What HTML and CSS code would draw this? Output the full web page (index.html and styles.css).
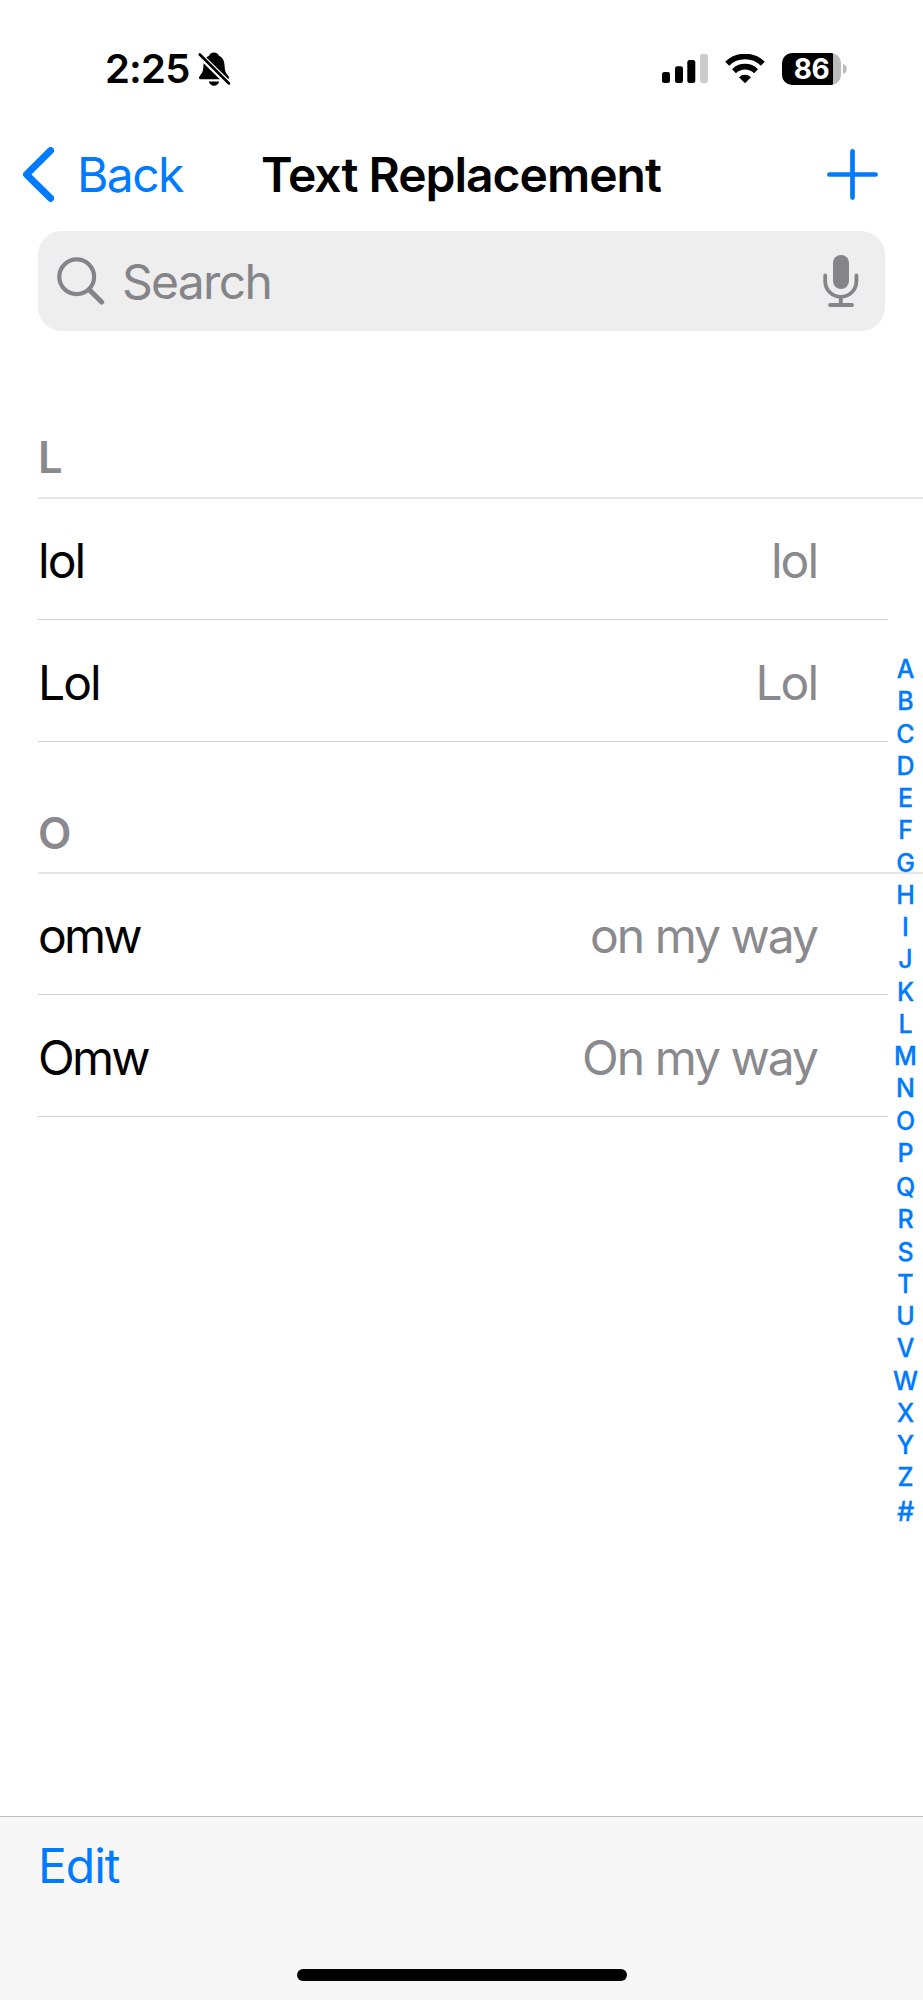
FILE: index.html
```html
<!DOCTYPE html>
<html lang="en">
<head>
<meta charset="utf-8">
<title>Text Replacement</title>
<link rel="stylesheet" href="styles.css">
</head>
<body>
<div class="screen">
  <div class="status">
    <span class="clock">2:25</span>
    <svg class="bell" width="32" height="36" viewBox="0 0 32 36">
      <path d="M16 1.6c-2.600 0-4.600 1.300-4.900 3.200C7.200 6.500 5.600 10 5.400 15c-.2 5.500-1.400 7.300-3.300 9.400C.6 26 .5 28.300 3 28.300h26c2.500 0 2.400-2.300.9-3.900-1.900-2.100-3.100-3.900-3.300-9.400-.2-5-1.800-8.500-5.700-10.200-.3-1.900-2.300-3.200-4.900-3.200z"/>
      <path d="M10.800 30.500h10.400c-.6 2.600-2.600 4.200-5.200 4.200s-4.600-1.600-5.200-4.200z"/>
      <path d="M-.5 2L32.500 34.500" stroke="#fff" stroke-width="6"/>
      <path d="M1.800 3.500L31 32.500" stroke="#000" stroke-width="2.600" stroke-linecap="round"/>
    </svg>
    <svg class="signal" width="46" height="30" viewBox="0 0 46 30">
      <rect x="0" y="18" width="8" height="11" rx="2.300"/>
      <rect x="13" y="12.300" width="8" height="16.700" rx="2.300"/>
      <rect x="25.300" y="6" width="8" height="23" rx="2.300"/>
      <rect x="38" y="0" width="8" height="29" rx="2.300" fill="#ccc"/>
    </svg>
    <svg class="wifi" width="40" height="30" viewBox="0 0 40 30">
      <path d="M2.200 9.700a25.500 25.500 0 0 1 35.600 0" fill="none" stroke="#000" stroke-width="5.600"/>
      <path d="M9 17.200a15.600 15.600 0 0 1 22 0" fill="none" stroke="#000" stroke-width="5.600"/>
      <path d="M20 29.300l-6-6.100a8.700 8.700 0 0 1 12 0z"/>
    </svg>
    <div class="battery"><span class="level">86</span></div>
    <svg class="nub" width="4" height="10" viewBox="0 0 4 10"><path d="M0 0c5 1.500 5 8.500 0 10z" fill="#bbb"/></svg>
  </div>

  <div class="nav">
    <svg class="chevron" width="32" height="55" viewBox="0 0 32 55"><path d="M28.600 3.600L4.500 27.400l24.100 23.800" fill="none" stroke="#007aff" stroke-width="7" stroke-linecap="round" stroke-linejoin="round"/></svg>
    <span class="back">Back</span>
    <h1 class="title">Text Replacement</h1>
    <svg class="plus" width="51" height="51" viewBox="0 0 51 51"><path d="M25.500 2.400v46.200M2.400 25.500h46.200" stroke="#007aff" stroke-width="4.700" stroke-linecap="round"/></svg>
  </div>

  <div class="search">
    <svg class="lens" width="48" height="49" viewBox="0 0 48 49" fill="none" stroke="#858589" stroke-linecap="round"><circle cx="19.700" cy="19.700" r="17.400" stroke-width="4.200"/><path d="M33 33.500L44.600 45" stroke-width="5.200"/></svg>
    <span class="placeholder">Search</span>
    <svg class="mic" width="36" height="52" viewBox="0 0 36 52" fill="none" stroke="#858589" stroke-width="3.800" stroke-linecap="round"><rect x="10" y="0" width="16" height="34" rx="8" fill="#858589" stroke="none"/><path d="M2.200 20.500v5.700a15.600 15.600 0 0 0 31.200 0v-5.700M17.800 42v8M7 50h22"/></svg>
  </div>

  <div class="list">
    <h2 class="head head-first">L</h2>
    <div class="row"><span>lol</span><span class="phrase">lol</span></div>
    <div class="row row-tall"><span>Lol</span><span class="phrase">Lol</span></div>
    <h2 class="head">O</h2>
    <div class="row"><span class="omw">omw</span><span class="phrase">on my way</span></div>
    <div class="row row-tall"><span class="omw">Omw</span><span class="phrase">On my way</span></div>
  </div>

  <div class="index">
    <span>A</span><span>B</span><span>C</span><span>D</span><span>E</span><span>F</span><span>G</span><span>H</span><span>I</span><span>J</span><span>K</span><span>L</span><span>M</span><span>N</span><span>O</span><span>P</span><span class="gap">Q</span><span>R</span><span>S</span><span>T</span><span>U</span><span>V</span><span>W</span><span>X</span><span>Y</span><span>Z</span><span class="gap hash">#</span>
  </div>

  <div class="toolbar">
    <span class="edit">Edit</span>
    <div class="home"></div>
  </div>
</div>
</body>
</html>
```

FILE: styles.css
```css
* { box-sizing: border-box; }
body {
  margin: 0;
  background: #fff;
  color: #000;
  font-family: Inter, "Liberation Sans", sans-serif;
  font-size: 48px;
}
h1, h2 { margin: 0; }
svg { display: block; flex: none; }
.screen {
  position: relative;
  display: flex;
  flex-direction: column;
  width: 923px;
  height: 2000px;
  overflow: hidden;
}
.status {
  display: flex;
  align-items: center;
  height: 137px;
  padding-left: 105px;
}
.clock {
  width: 93px;
  font-size: 40px;
  font-weight: 600;
  letter-spacing: -0.8px;
  line-height: 48px;
}
.signal { margin-left: 432px; }
.wifi { margin-left: 17px; }
.battery {
  width: 59px;
  height: 32px;
  margin-left: 17px;
  border-radius: 10px;
  background: linear-gradient(to right, #000 51px, #bbb 51px);
  color: #fff;
  text-align: center;
}
.level {
  display: block;
  font-size: 28px;
  font-weight: 650;
  line-height: 33px;
  letter-spacing: -0.5px;
}
.nub { margin-left: 2px; }
.nav {
  display: flex;
  align-items: center;
  height: 75px;
  padding-left: 22px;
  line-height: 75px;
  white-space: nowrap;
}
.back {
  width: 184px;
  margin-left: 23px;
  color: #007aff;
  letter-spacing: -1.6px;
}
.title {
  width: 566px;
  font-size: 48px;
  font-weight: 600;
  letter-spacing: -1px;
}
.search {
  display: flex;
  align-items: center;
  height: 100px;
  margin: 19px 38px 0;
  padding: 0 26px 0 19px;
  border-radius: 24px;
  background: #eee;
  color: #858589;
}
.placeholder { margin-left: 17px; letter-spacing: -1.7px; }
.mic { margin-left: auto; }
.list { padding-left: 38px; }
.head {
  display: flex;
  align-items: flex-end;
  height: 132px;
  padding: 0 0 12px;
  border-bottom: 2px solid #e6e6e6;
  color: #8a8a8e;
  font-size: 43.5px;
  font-weight: 600;
  line-height: 53px;
}
.head-first { height: 168px; padding-bottom: 13px; }
.row {
  display: flex;
  align-items: center;
  justify-content: space-between;
  width: 850px;
  height: 121px;
  padding: 3px 71px 0 0;
  border-bottom: 1px solid #d4d4d5;
  letter-spacing: -2px;
}
.row-tall { height: 122px; }
.omw { letter-spacing: -2.8px; }
.phrase { color: #8a8a8e; }
.index {
  position: absolute;
  top: 653px;
  right: 0;
  display: flex;
  flex-direction: column;
  width: 35px;
  color: #007aff;
  font-size: 25px;
  font-weight: 500;
  line-height: 32.25px;
  text-align: center;
  -webkit-text-stroke: 0.3px #007aff;
}
.gap { margin-top: 2px; }
.hash { font-size: 27px; }
.toolbar {
  display: flex;
  flex-direction: column;
  justify-content: space-between;
  height: 184px;
  margin-top: auto;
  padding: 20px 38px 19px;
  border-top: 1px solid #bfbfbf;
  background: #f7f7f7;
}
.edit { color: #007aff; line-height: 58px; letter-spacing: -1px; }
.home {
  align-self: center;
  width: 330px;
  height: 12px;
  border-radius: 6px;
  background: #000;
}
```
